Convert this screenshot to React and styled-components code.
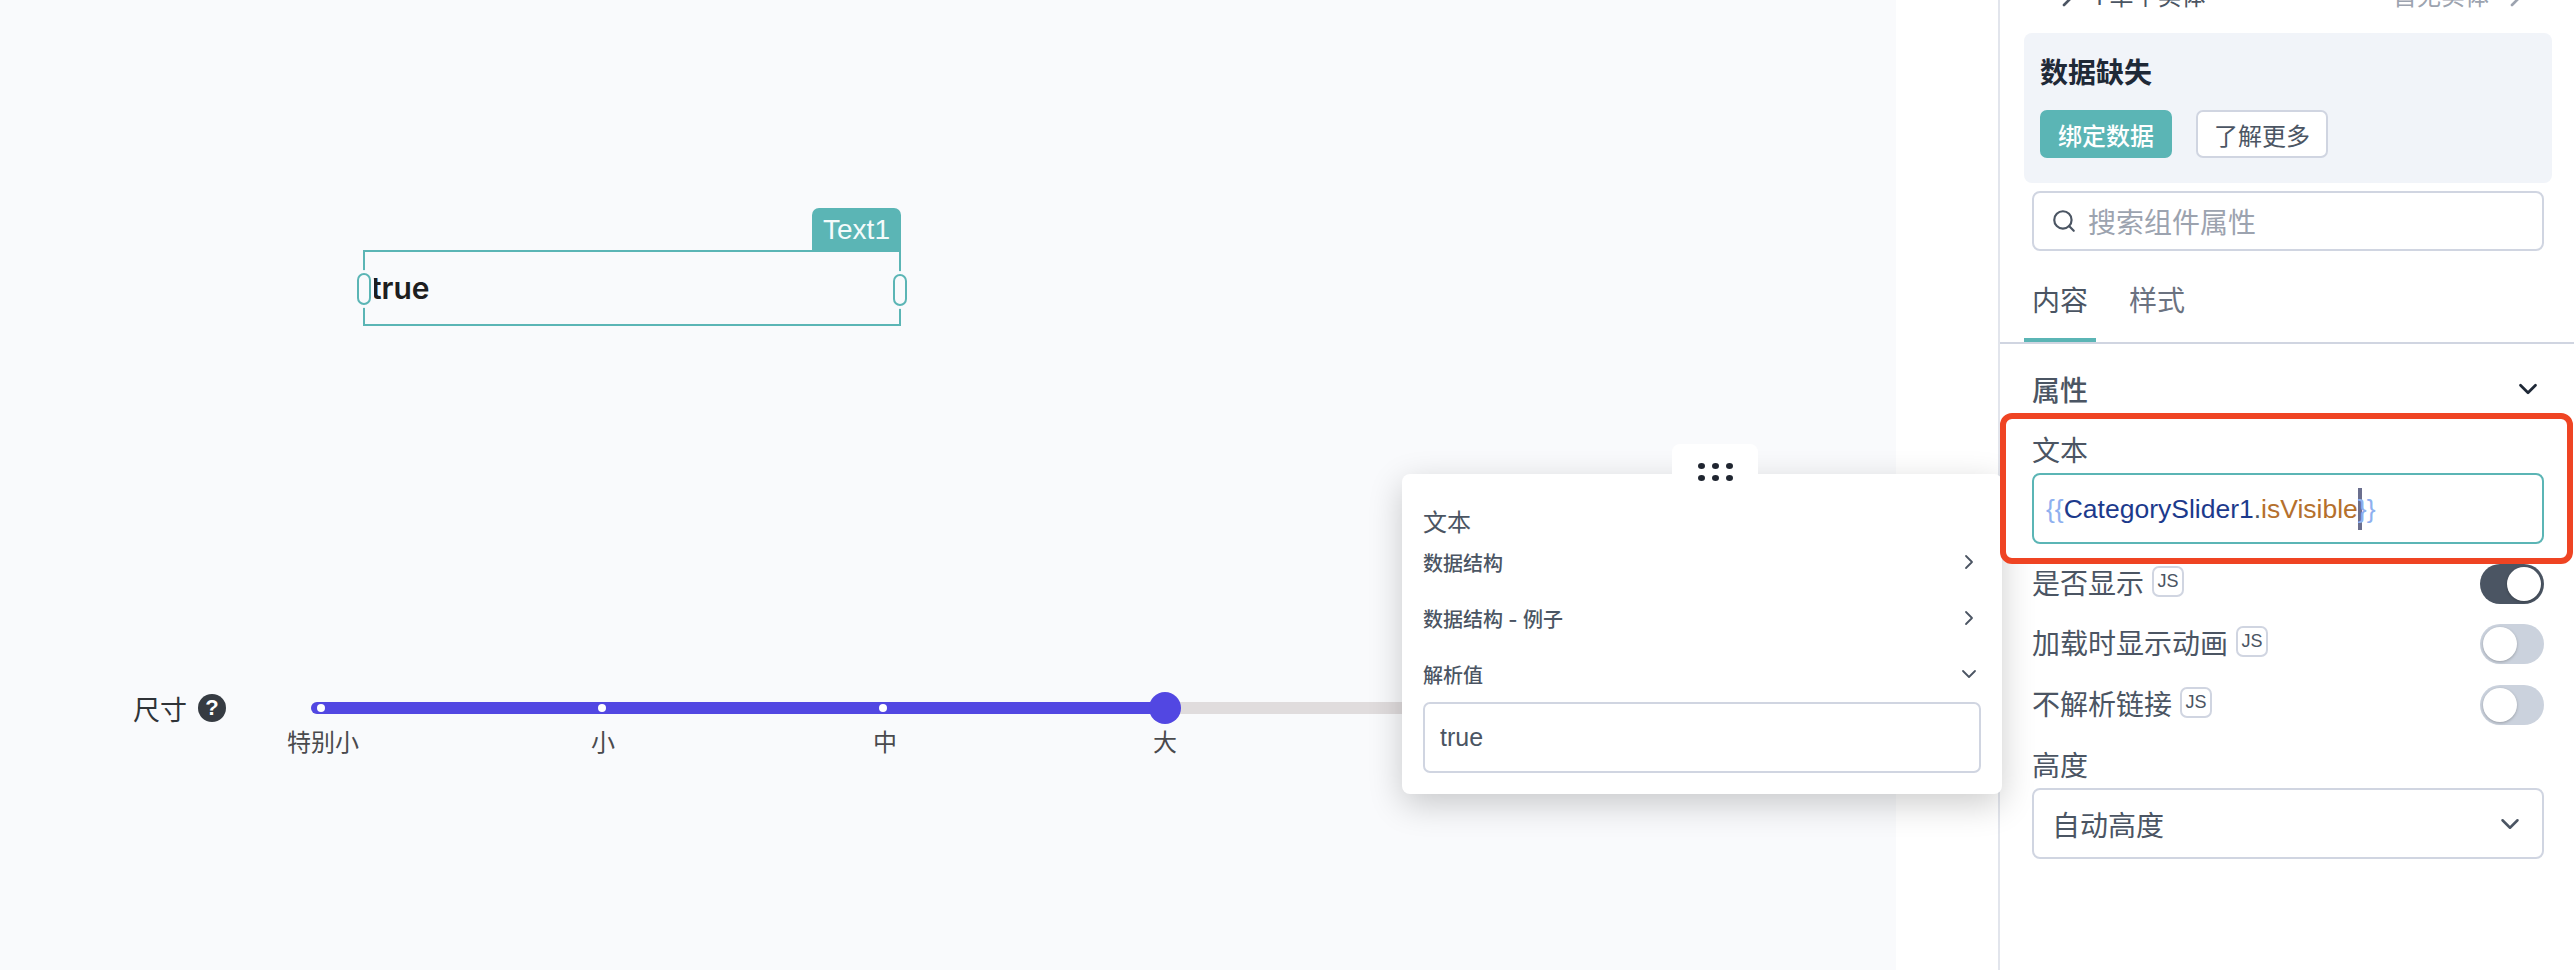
import React from "react";
import styled, { createGlobalStyle } from "styled-components";
import { ChevronDown, ChevronRight, Search } from "lucide-react";

const teal = "#5bb5b5";
const line = "#d0d5e1";
const cjk = `"Inter", "Noto Sans CJK SC", sans-serif`;
const latin = `"Liberation Sans", "Noto Sans CJK SC", sans-serif`;

const GlobalStyle = createGlobalStyle`
  html, body {
    margin: 0;
    padding: 0;
    background: #fff;
  }
  * {
    box-sizing: border-box;
  }
`;

const Page = styled.div`
  position: relative;
  display: flex;
  width: 2574px;
  height: 970px;
  overflow: hidden;
  font-family: ${cjk};
  color: #4b5563;
`;

const Canvas = styled.main`
  position: relative;
  flex: 0 0 1896px;
  background: #f9fafc;
`;

const Gutter = styled.div`
  flex: 0 0 102px;
  background: #fff;
`;

/* widgets sit on a free canvas */
const TextWidget = styled.div`
  position: absolute;
  left: 363px;
  top: 250px;
  width: 538px;
  height: 76px;
  border: 2px solid ${teal};
  display: flex;
  align-items: center;
  padding-left: 6px;
  padding-bottom: 1px;
  font-size: 30px;
  font-weight: 600;
  color: #1d1d20;
`;

const WidgetTag = styled.div`
  position: absolute;
  right: -2px;
  top: -44px;
  width: 89px;
  height: 42px;
  background: ${teal};
  border-radius: 7px 7px 0 0;
  color: #f4fbfb;
  font-family: ${latin};
  font-size: 28px;
  font-weight: 400;
  line-height: 44px;
  text-align: center;
`;

const Handle = styled.span`
  position: absolute;
  top: 21px;
  ${(p) => (p.$side === "left" ? "left: -8px;" : "right: -8px; margin-top: 1px;")}
  width: 14px;
  height: 32px;
  border: 2px solid ${teal};
  border-radius: 7px;
  background: #f9fafc;
  box-shadow: 0 0 0 3px #f9fafc;
`;

const SizeLabel = styled.div`
  position: absolute;
  left: 133px;
  top: 692px;
  display: flex;
  align-items: center;
  gap: 11px;
  height: 32px;
  font-size: 27px;
  color: #2f3337;
`;

const HelpDot = styled.span`
  width: 28px;
  height: 28px;
  border-radius: 50%;
  background: #363b42;
  color: #fff;
  font-family: ${latin};
  font-size: 22px;
  font-weight: 700;
  line-height: 28px;
  text-align: center;
`;

const Track = styled.div`
  position: absolute;
  left: 311px;
  top: 702px;
  width: 1140px;
  height: 12px;
  border-radius: 6px;
  background: #e0dcdd;
`;

const TrackFill = styled.div`
  height: 100%;
  border-radius: 6px 0 0 6px;
  background: #5247e2;
`;

const Tick = styled.span`
  position: absolute;
  top: 2px;
  width: 8px;
  height: 8px;
  margin-left: -4px;
  border-radius: 50%;
  background: #fff;
`;

const Thumb = styled.span`
  position: absolute;
  top: -10px;
  width: 32px;
  height: 32px;
  margin-left: -16px;
  border-radius: 50%;
  background: #5247e2;
`;

const TickLabel = styled.span`
  position: absolute;
  top: 27px;
  transform: translateX(-50%);
  font-size: 24px;
  line-height: 28px;
  white-space: nowrap;
  color: #4a4a4d;
`;

/* floating debugger popover */
const Popover = styled.aside`
  position: absolute;
  z-index: 2;
  left: 1402px;
  top: 474px;
  width: 600px;
  height: 320px;
  padding: 0 21px;
  background: #fff;
  border-radius: 8px;
  box-shadow: 0 10px 34px rgba(0, 0, 0, 0.2);
`;

const DragTab = styled.div`
  position: absolute;
  left: 270px;
  top: -30px;
  width: 86px;
  height: 44px;
  background: #fff;
  border-radius: 8px 8px 0 0;
  display: grid;
  grid-template-columns: repeat(3, 7px);
  justify-content: center;
  align-content: start;
  gap: 6px 7px;
  padding-top: 19px;

  span {
    width: 7px;
    height: 6px;
    border-radius: 50%;
    background: #1f2530;
  }
`;

const PopTitle = styled.div`
  padding-top: 33px;
  font-size: 24px;
  line-height: 32px;
  color: #4b5563;
`;

const PopRows = styled.div`
  margin-top: -5px;
`;

const PopRow = styled.div`
  display: flex;
  align-items: center;
  justify-content: space-between;
  height: 56px;
  font-size: 20px;
  font-weight: 500;
  color: #4b5563;
`;

const PopValue = styled.div`
  height: 71px;
  padding-left: 15px;
  display: flex;
  align-items: center;
  border: 2px solid ${line};
  border-radius: 7px;
  font-family: ${latin};
  font-size: 25px;
  color: #4b5563;
`;

/* property sidebar */
const Sidebar = styled.section`
  flex: 0 0 576px;
  border-left: 2px solid #e2e5ec;
  background: #fff;
`;

const EntityRow = styled.div`
  display: flex;
  justify-content: space-between;
  align-items: center;
  height: 33px;
  padding: 0 37px 26px 49px;
  font-size: 24px;
  color: #4b5563;
  transform: translateY(-9px);
`;

const EntityName = styled.div`
  display: flex;
  align-items: center;
  gap: ${(p) => (p.$muted ? 8 : 4)}px;
  color: ${(p) => (p.$muted ? "#9ca3af" : "#4b5563")};
`;

const MissingCard = styled.div`
  height: 150px;
  margin: 0 22px 0 24px;
  padding: 22px 16px;
  background: #f1f4f9;
  border-radius: 8px;
`;

const MissingTitle = styled.div`
  font-size: 28px;
  font-weight: 600;
  line-height: 36px;
  color: #1f2937;
`;

const ButtonRow = styled.div`
  display: flex;
  gap: 24px;
  margin-top: 19px;
`;

const CardButton = styled.button`
  width: 132px;
  height: 48px;
  padding: 0;
  border: 2px solid ${(p) => (p.$primary ? teal : line)};
  border-radius: 7px;
  background: ${(p) => (p.$primary ? teal : "#fff")};
  color: ${(p) => (p.$primary ? "#fff" : "#4b5563")};
  font-family: ${cjk};
  font-size: 24px;
  font-weight: ${(p) => (p.$primary ? 500 : 400)};
`;

const SearchBox = styled.div`
  display: flex;
  align-items: center;
  gap: 11px;
  height: 60px;
  margin: 8px 30px 0 32px;
  padding-left: 17px;
  border: 2px solid ${line};
  border-radius: 8px;
  font-size: 28px;
  color: #9ca3af;

  svg {
    color: #4b5563;
  }
`;

const Tabs = styled.div`
  display: flex;
  height: 93px;
  padding: 0 0 0 24px;
  border-bottom: 2px solid ${line};
`;

const Tab = styled.div`
  width: 72px;
  margin-right: 33px;
  padding: 31px 0 0 ${(p) => (p.$active ? 8 : 0)}px;
  height: 91px;
  border-bottom: ${(p) => (p.$active ? `4px solid ${teal}` : "none")};
  font-size: 28px;
  line-height: 38px;
  color: ${(p) => (p.$active ? "#4b5563" : "#6b7280")};
`;

const SectionHead = styled.div`
  display: flex;
  align-items: center;
  justify-content: space-between;
  height: 69px;
  padding: 21px 31px 0 32px;
  font-size: 28px;
  font-weight: 500;
  color: #4b5563;

  svg {
    color: #1f2937;
  }
`;

const FocusField = styled.div`
  position: relative;
  z-index: 3;
  height: 151px;
  margin-right: 1px;
  padding: 12px 23px 0 26px;
  background: #fff;
  border: 6px solid #ef4423;
  border-radius: 12px;
`;

const FieldLabel = styled.div`
  height: 40px;
  font-size: 28px;
  line-height: 40px;
  color: #4b5563;
`;

const CodeInput = styled.div`
  display: flex;
  align-items: center;
  height: 71px;
  margin-top: 2px;
  padding-left: 12px;
  padding-top: 1px;
  border: 2px solid ${teal};
  border-radius: 8px;
  font-family: ${latin};
  font-size: 26.5px;
  white-space: pre;
`;

const Token = styled.span`
  color: ${(p) => p.$color};
`;

const Caret = styled.span`
  width: 4px;
  height: 42px;
  margin: 0 -4px 0 0;
  background: #6b6f8e;
`;

const Props = styled.div`
  padding: 0 30px 0 32px;
`;

const SwitchRow = styled.div`
  display: flex;
  align-items: center;
  justify-content: space-between;
  height: 40px;
  margin-top: ${(p) => p.$top}px;
  font-size: 28px;
`;

const SwitchLabel = styled.div`
  display: flex;
  align-items: center;
  gap: 8px;
  margin-bottom: 5px;
`;

const JsBadge = styled.span`
  width: 32px;
  height: 31px;
  border: 2px solid ${line};
  border-radius: 7px;
  font-family: ${latin};
  font-size: 18px;
  line-height: 27px;
  text-align: center;
  color: #4b5563;
`;

const Switch = styled.span`
  display: flex;
  align-items: center;
  justify-content: ${(p) => (p.$on ? "flex-end" : "flex-start")};
  width: 64px;
  height: 40px;
  padding: 0 3px;
  border-radius: 20px;
  background: ${(p) => (p.$on ? "#4b5563" : "#cbd2dd")};

  &::after {
    content: "";
    width: 34px;
    height: 34px;
    border-radius: 50%;
    background: #fff;
    box-shadow: 0 1px 3px rgba(0, 0, 0, 0.25);
  }
`;

const HeightLabel = styled(FieldLabel)`
  margin-top: 21px;
`;

const SelectBox = styled.div`
  display: flex;
  align-items: center;
  justify-content: space-between;
  height: 71px;
  margin-top: 2px;
  padding: 0 17px 0 18px;
  border: 2px solid ${line};
  border-radius: 8px;
  font-size: 28px;
  color: #4b5563;
`;

const ticks = [
  { at: 10, text: "特别小", labelAt: 12 },
  { at: 291, text: "小", labelAt: 292 },
  { at: 572, text: "中", labelAt: 574 },
];

const switches = [
  { text: "是否显示", on: true, top: 0 },
  { text: "加载时显示动画", on: false, top: 20 },
  { text: "不解析链接", on: false, top: 21 },
];

const App = () => {
  return (
    <Page>
      <GlobalStyle />
      <Canvas>
        <TextWidget>
          <WidgetTag>Text1</WidgetTag>
          <Handle $side="left" />
          <Handle $side="right" />
          true
        </TextWidget>

        <SizeLabel>
          尺寸
          <HelpDot>?</HelpDot>
        </SizeLabel>
        <Track>
          <TrackFill style={{ width: 854 }} />
          {ticks.map((t) => (
            <React.Fragment key={t.text}>
              <Tick style={{ left: t.at }} />
              <TickLabel style={{ left: t.labelAt }}>{t.text}</TickLabel>
            </React.Fragment>
          ))}
          <Thumb style={{ left: 854 }} />
          <TickLabel style={{ left: 854 }}>大</TickLabel>
        </Track>
      </Canvas>
      <Gutter />

      <Popover>
        <DragTab>
          <span /><span /><span /><span /><span /><span />
        </DragTab>
        <PopTitle>文本</PopTitle>
        <PopRows>
          <PopRow>
            数据结构
            <ChevronRight size={24} strokeWidth={1.8} />
          </PopRow>
          <PopRow>
            数据结构 - 例子
            <ChevronRight size={24} strokeWidth={1.8} />
          </PopRow>
          <PopRow>
            解析值
            <ChevronDown size={24} strokeWidth={1.8} />
          </PopRow>
        </PopRows>
        <PopValue>true</PopValue>
      </Popover>

      <Sidebar>
        <EntityRow>
          <EntityName>
            <ChevronRight size={40} strokeWidth={1.6} />
            1 单个实体
          </EntityName>
          <EntityName $muted>
            首无实体
            <ChevronRight size={40} strokeWidth={1.6} />
          </EntityName>
        </EntityRow>

        <MissingCard>
          <MissingTitle>数据缺失</MissingTitle>
          <ButtonRow>
            <CardButton $primary>绑定数据</CardButton>
            <CardButton>了解更多</CardButton>
          </ButtonRow>
        </MissingCard>

        <SearchBox>
          <Search size={26} strokeWidth={2} />
          搜索组件属性
        </SearchBox>

        <Tabs>
          <Tab $active>内容</Tab>
          <Tab>样式</Tab>
        </Tabs>

        <SectionHead>
          属性
          <ChevronDown size={30} strokeWidth={2.2} />
        </SectionHead>

        <FocusField>
          <FieldLabel>文本</FieldLabel>
          <CodeInput>
            <Token $color="#8fb0ef">{"{{"}</Token>
            <Token $color="#1c3a8c">CategorySlider1</Token>
            <Token $color="#4b5563">.</Token>
            <Token $color="#b5702d">isVisible</Token>
            <Caret />
            <Token $color="#8fb0ef">{"}}"}</Token>
          </CodeInput>
        </FocusField>

        <Props>
          {switches.map((s) => (
            <SwitchRow key={s.text} $top={s.top}>
              <SwitchLabel>
                {s.text}
                <JsBadge>JS</JsBadge>
              </SwitchLabel>
              <Switch $on={s.on} />
            </SwitchRow>
          ))}
          <HeightLabel>高度</HeightLabel>
          <SelectBox>
            自动高度
            <ChevronDown size={30} strokeWidth={2} />
          </SelectBox>
        </Props>
      </Sidebar>
    </Page>
  );
};

export default App;
